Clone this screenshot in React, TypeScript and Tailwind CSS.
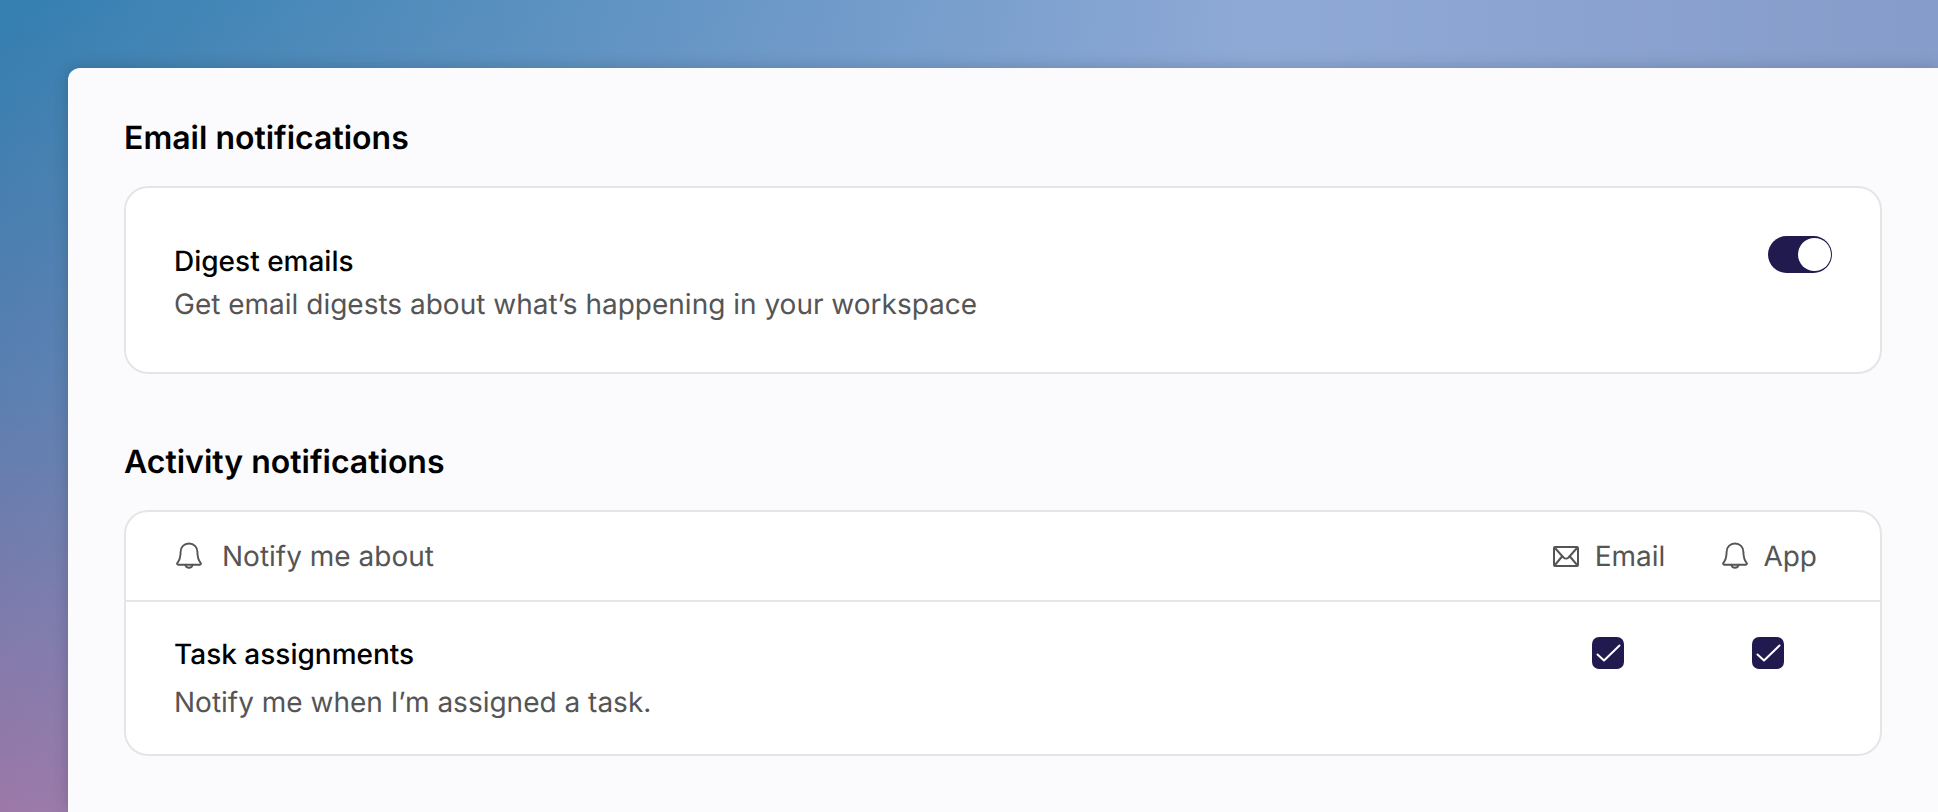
import React from 'react';

const font = 'font-[Inter,sans-serif] [text-rendering:geometricPrecision]';

function BellIcon() {
  return (
    <svg width="26" height="28" viewBox="0 0 26 28" fill="none" stroke="#555555" strokeWidth="1.9" strokeLinecap="round" strokeLinejoin="round">
      <path d="M13 1.500c-4.900 0-8.400 3.600-8.400 8.400 0 5.200-1 8.200-3.300 11.200-.5.7 0 1.600.8 1.600h21.800c.8 0 1.300-.9.8-1.600-2.300-3-3.300-6-3.300-11.200 0-4.800-3.500-8.400-8.400-8.400Z" />
      <path d="M9.300 22.800a3.800 3.800 0 0 0 7.400 0" />
    </svg>
  );
}

function MailIcon() {
  return (
    <svg width="26" height="21" viewBox="0 0 26 21" fill="none" stroke="#555555" strokeWidth="2" strokeLinejoin="round">
      <rect x="1" y="1" width="24" height="19" rx="1" />
      <path d="M1.500 1.500 10.500 11.500c1.400 1.400 3.600 1.400 5 0l9-10" />
      <path d="M1.500 19.500 9.500 10M24.500 19.500 16.500 10" />
    </svg>
  );
}

function Checkbox() {
  return (
    <div className="w-8 h-8 rounded-[7px] bg-[#211a4f]">
      <svg width="32" height="32" viewBox="0 0 32 32" fill="none" stroke="#ffffff" strokeWidth="2" strokeLinecap="round" strokeLinejoin="round">
        <path d="M5.500 17.500 12 23.500 27.500 8.500" />
      </svg>
    </div>
  );
}

export default function App() {
  return (
    <div className={`${font} h-screen overflow-hidden flex flex-col pl-[68px] pt-[68px] bg-[linear-gradient(to_right,rgba(143,169,214,0)_0%,rgba(143,169,214,1)_65%,rgba(134,156,202,1)_100%),linear-gradient(to_bottom,#337fb0_0%,#5d7fb0_50%,#9c78a8_100%)]`}>
      <div className="flex-1 bg-[#fbfbfd] rounded-tl-[12px] shadow-[0_0_16px_rgba(0,0,0,0.18)] pl-[56px] pr-[56px]">
        <h2 className="text-[32px] leading-[38px] font-semibold text-black mt-[51px]">Email notifications</h2>
        <div className="mt-[29px] h-[188px] bg-white border-2 border-[#e5e5e5] rounded-[24px] pl-[48px] pr-[48px] flex justify-between">
          <div className="pt-[55px]">
            <div className="text-[28px] leading-[36px] font-medium text-black">Digest emails</div>
            <div className="mt-[7px] text-[28px] leading-[36px] text-[#555555]">Get email digests about what’s happening in your workspace</div>
          </div>
          <div className="mt-[48px] w-[64px] h-[37px] rounded-full bg-[#211a4f] flex items-start justify-end pt-[2px] pr-[1px] shrink-0">
            <div className="w-[33px] h-[33px] rounded-full bg-white" />
          </div>
        </div>

        <h2 className="text-[32px] leading-[38px] font-semibold text-black mt-[69px]">Activity notifications</h2>
        <div className="mt-[29px] h-[246px] bg-white border-2 border-[#e5e5e5] rounded-[24px]">
          <div className="h-[90px] border-b-2 border-[#e5e5e5] pl-[50px] flex items-center justify-between text-[28px] text-[#555555]">
            <div className="flex items-center gap-[20px]">
              <BellIcon />
              <span>Notify me about</span>
            </div>
            <div className="flex items-center pr-[63px]">
              <div className="flex items-center gap-[16px]">
                <MailIcon />
                <span>Email</span>
              </div>
              <div className="flex items-center gap-[15px] ml-[57px]">
                <BellIcon />
                <span>App</span>
              </div>
            </div>
          </div>
          <div className="flex justify-between pl-[48px] pr-[96px]">
            <div className="pt-[34px]">
              <div className="text-[28px] leading-[36px] font-medium text-black">Task assignments</div>
              <div className="mt-[12px] text-[28px] leading-[36px] text-[#555555]">Notify me when I’m assigned a task.</div>
            </div>
            <div className="flex gap-[128px] pt-[35px]">
              <Checkbox />
              <Checkbox />
            </div>
          </div>
        </div>
      </div>
    </div>
  );
}
